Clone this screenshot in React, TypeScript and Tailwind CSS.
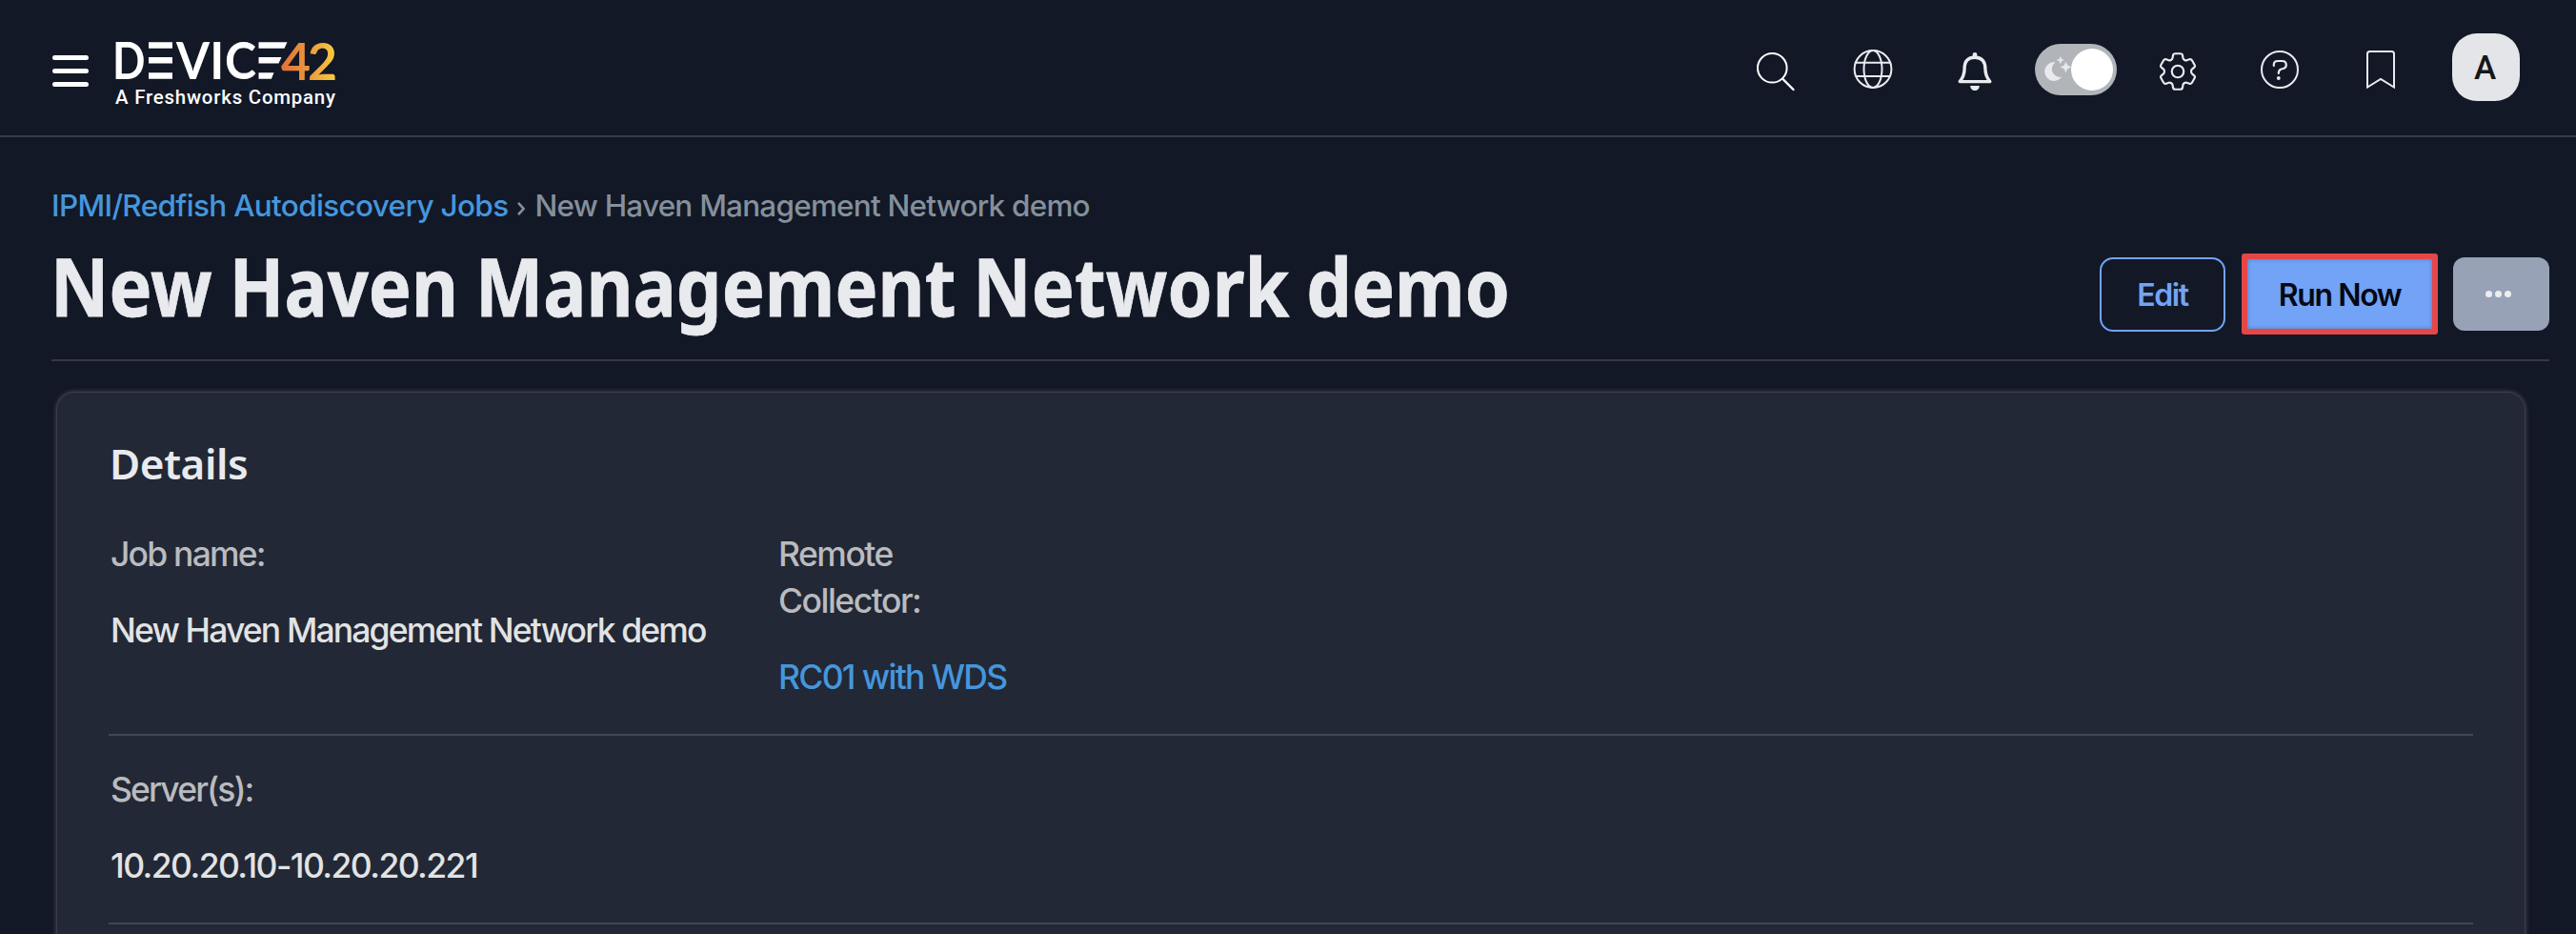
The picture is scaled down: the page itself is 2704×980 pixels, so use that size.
import type { ReactNode } from "react";
import { HiOutlineCog6Tooth } from "react-icons/hi2";

function Slot({ children }: { children: ReactNode }) {
  return <div className="flex w-[106.6px] shrink-0 items-center justify-center pt-1">{children}</div>;
}

function Glyph({ children, label }: { children: ReactNode; label: string }) {
  return (
    <Slot>
      <svg
        aria-label={label}
        width="56"
        height="56"
        viewBox="-28 -28 56 56"
        fill="none"
        stroke="#e9eaee"
        strokeWidth="2"
        strokeLinecap="round"
        strokeLinejoin="round"
      >
        {children}
      </svg>
    </Slot>
  );
}

function Logo() {
  return (
    <svg width="240" height="80" viewBox="0 0 240 80" className="overflow-visible font-['Lato'] font-bold" fill="#fff">
      <defs>
        <linearGradient id="warm" gradientUnits="userSpaceOnUse" x1="176" y1="0" x2="234" y2="0">
          <stop offset="0" stopColor="#e2703a" />
          <stop offset="0.5" stopColor="#eb9a3c" />
          <stop offset="1" stopColor="#f7cf3f" />
        </linearGradient>
      </defs>
      <g fontSize="53.5">
        <text x="-2" y="48.7" textLength="34.5" lengthAdjust="spacingAndGlyphs">D</text>
        <text x="65" y="48.7" textLength="35" lengthAdjust="spacingAndGlyphs">V</text>
        <text x="100.2" y="48.7" textLength="15" lengthAdjust="spacingAndGlyphs">I</text>
        <text x="116" y="48.7" textLength="33" lengthAdjust="spacingAndGlyphs">C</text>
        <g fill="url(#warm)">
          <text x="175" y="49.5" textLength="31" lengthAdjust="spacingAndGlyphs">4</text>
          <text x="203" y="49.5" textLength="31" lengthAdjust="spacingAndGlyphs">2</text>
        </g>
      </g>
      <path d="M36 10.3h25v6.4h-25zM36 26h25v6.4h-25zM36 42.3h25v6.4h-25z" />
      <path d="M151.5 10.3h30l-3 6.4h-27zM151.5 26h24l-3 6.4h-21zM151.5 42.3h16l-2.6 6.4h-13.4z" />
      <text x="1" y="75" fontSize="20.4" textLength="231" className="font-['Roboto'] font-medium">
        A Freshworks Company
      </text>
    </svg>
  );
}

function Header() {
  return (
    <header className="flex h-[144px] shrink-0 border-b-2 border-[#363a48]">
      <div className="flex w-[66px] flex-col items-end gap-[8.5px] pt-[57.5px]">
        <div className="-mr-[27px] h-[5.5px] w-[38.5px] rounded-full bg-white" />
        <div className="-mr-[27px] h-[5.5px] w-[38.5px] rounded-full bg-white" />
        <div className="-mr-[27px] h-[5.5px] w-[38.5px] rounded-full bg-white" />
      </div>
      <div className="ml-[54px] pt-[34px]">
        <Logo />
      </div>
      <div className="ml-auto flex pr-[59px]">
        <Glyph label="Search">
          <circle cx="0.3" cy="-1.7" r="15.3" stroke="#fff" />
          <path d="M11.5 10L22.5 21" stroke="#fff" strokeWidth="2.4" />
        </Glyph>
        <Glyph label="Language">
          <circle cx="0" cy="-0.5" r="19.4" />
          <ellipse cx="0" cy="-0.5" rx="9.5" ry="19.4" />
          <path d="M-17.6-7.2H17.6M-17.6 7H17.6" />
        </Glyph>
        <Glyph label="Notifications">
          <path
            d="M-15.8 12.6C-12.4 8.4-10.9 4-10.9-1C-10.9-9-7-12.8 0-12.8S10.9-9 10.9-1C10.9 4 12.4 8.4 15.8 12.6Z"
            strokeWidth="3.4"
          />
          <path d="M0-15.6V-14" strokeWidth="4.8" />
          <path d="M-4.8 17H4.8C4.8 20 2.6 22 0 22S-4.8 20-4.8 17Z" fill="#e9eaee" stroke="none" />
        </Glyph>
        <Slot>
          <div className="flex h-[54px] w-[86px] shrink-0 items-center justify-between rounded-full bg-[#b1b5ba] pr-1 pl-2.5">
            <svg width="28" height="32" viewBox="0 0 28 32" className="-mr-1 shrink-0" fill="#e9eaee">
              <path d="M11.5 8.2A8.7 8.7 0 0 0 18.2 23.8A9.9 9.9 0 1 1 11.5 8.2Z" />
              <path d="M16.8 2.4Q17.2 5.6 20.4 6Q17.2 6.4 16.8 9.6Q16.4 6.4 13.2 6Q16.4 5.6 16.8 2.4Z" stroke="#e9eaee" strokeWidth="0.6" />
              <path d="M22.4 8.2Q23 12.8 27.6 13.4Q23 14 22.4 18.6Q21.8 14 17.2 13.4Q21.8 12.8 22.4 8.2Z" stroke="#e9eaee" strokeWidth="0.8" />
            </svg>
            <div className="size-11 shrink-0 rounded-full bg-white" />
          </div>
        </Slot>
        <Slot>
          <HiOutlineCog6Tooth className="mt-1 size-[50px] text-[#e9eaee]" strokeWidth={1.05} />
        </Slot>
        <Glyph label="Help">
          <circle cx="0" cy="0" r="19" />
          <path d="M-6.2-4V-5.2Q-6.2-9-2-9H2.4Q6.8-9 6.8-4.8Q6.8-2.2 4.4-1.2L1-.2Q-1.2 .8-1.2 4" strokeWidth="2.2" />
          <circle cx="-1.2" cy="9" r="1.9" fill="#e9eaee" stroke="none" />
        </Glyph>
        <Glyph label="Bookmarks">
          <path d="M-14 18.5V-16.5Q-14-19-11.5-19H11.5Q14-19 14-16.5V18.5L0 10Z" strokeLinejoin="miter" />
        </Glyph>
        <div className="mt-[35px] ml-[21.5px] flex size-[71px] items-center justify-center rounded-[26px] bg-[#e4e5e9] pt-[3px] pr-[2px] font-['Roboto'] text-[35px] font-medium text-[#161616]">
          A
        </div>
      </div>
    </header>
  );
}

function TitleBar() {
  return (
    <section className="mr-7 ml-[54px] flex h-[235px] shrink-0 justify-between border-b-2 border-[#363747] pt-[50.5px]">
      <div className="w-[1600px] whitespace-nowrap">
        <nav className="flex pt-px text-[31.5px] leading-[40px] font-medium">
          <a className="w-[489px] tracking-[-0.68px] text-[#4596dd]">IPMI/Redfish Autodiscovery Jobs</a>
          <svg width="8" height="14" viewBox="0 0 8 14" className="mt-[16px] mr-[10.5px] shrink-0" fill="none" stroke="#84909b" strokeWidth="2.6">
            <path d="M1 .8L6.6 7L1 13.2" />
          </svg>
          <span className="tracking-[-0.79px] text-[#84909b]">New Haven Management Network demo</span>
        </nav>
        <h1 className="mt-[16px] -ml-px origin-left scale-x-[0.898] font-['Noto_Sans'] text-[84px] leading-[96px] font-bold tracking-[0.1px] text-[#e9eaee] [-webkit-text-stroke:0.8px_#e9eaee] [word-spacing:-2px]">
          New Haven Management Network demo
        </h1>
      </div>
      <div className="flex text-[32px] font-semibold tracking-[-1.4px]">
        <button className="mt-[75.5px] mr-[17px] h-[78px] w-[132px] rounded-[14px] border-2 border-[#72a3f6] pt-[2px] text-[#72a3f6]">
          Edit
        </button>
        <button className="mt-[71.5px] mr-4 h-[85px] w-[206px] rounded-[3px] border-6 border-[#e54749] bg-[#72a3f6] pt-[2px] text-[#050814] shadow-[inset_0_0_4px_#5078bd]">
          Run Now
        </button>
        <button aria-label="More" className="mt-[75.5px] flex h-[77px] w-[101px] items-center justify-center gap-[2.6px] rounded-xl bg-[#98a2b7] pr-[6px]">
          <i className="size-[7px] rounded-full bg-[#eceef2]" />
          <i className="size-[7px] rounded-full bg-[#eceef2]" />
          <i className="size-[7px] rounded-full bg-[#eceef2]" />
        </button>
      </div>
    </section>
  );
}

function Details() {
  return (
    <section className="mt-[33px] mr-[54px] ml-[60px] h-[640px] shrink-0 rounded-[18px] bg-[#222835] px-[54px] pt-[44px] text-[35.5px] leading-[49px] font-medium tracking-[-1.5px] whitespace-nowrap shadow-[0_0_0_1px_#3a3e4a,0_0_5px_1px_#4a4757]">
      <h2 className="pl-[1px] font-['Noto_Sans'] text-[44px] leading-[60px] font-semibold tracking-[-0.4px] text-[#e9eaee]">
        Details
      </h2>
      <div className="mt-[40.5px] flex h-[215.5px] border-b-2 border-[#424754] pl-[2px]">
        <div className="w-[700px]">
          <div className="tracking-[-1.8px] text-[#babbbf]">Job name:</div>
          <div className="mt-[31px] tracking-[-1.85px] text-[#e2e3e4]">New Haven Management Network demo</div>
        </div>
        <div className="pl-px">
          <div className="text-[#babbbf]">
            Remote
            <br />
            Collector:
          </div>
          <a className="mt-[31px] block tracking-[-1.7px] text-[#4596dd]">RC01 with WDS</a>
        </div>
      </div>
      <div className="h-[198px] border-b-2 border-[#424754] pt-[32px] pl-[2px]">
        <div className="tracking-[-1.9px] text-[#babbbf]">Server(s):</div>
        <div className="mt-[31px] tracking-[-1.57px] text-[#e2e3e4]">10.20.20.10-10.20.20.221</div>
      </div>
    </section>
  );
}

export default function App() {
  return (
    <main className="flex h-[980px] w-[2704px] flex-col overflow-hidden bg-[#121826] font-['Inter',sans-serif]">
      <Header />
      <TitleBar />
      <Details />
    </main>
  );
}
